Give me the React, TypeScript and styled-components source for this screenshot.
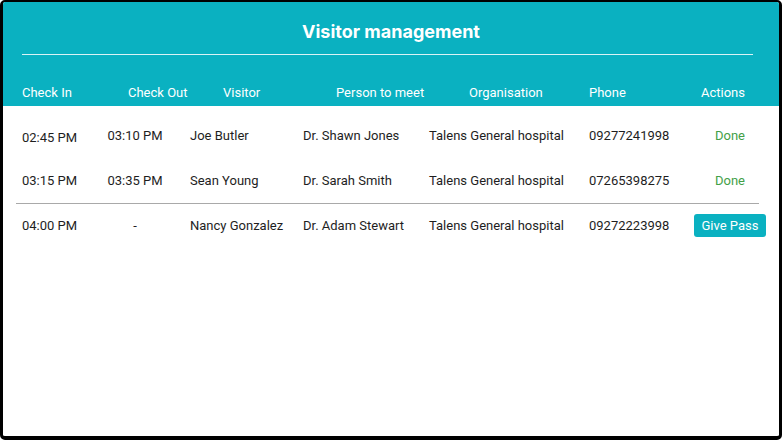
import React from "react";
import styled, { createGlobalStyle } from "styled-components";

const Global = createGlobalStyle`
  html, body { margin: 0; padding: 0; background: #ffffff; }
  * { box-sizing: border-box; }
`;

const Frame = styled.div`
  width: 782px;
  height: 440px;
  border-style: solid;
  border-color: #000;
  border-width: 2px 3px 4px 3px;
  border-radius: 5px;
  background: #fff;
  overflow: hidden;
  font-family: Roboto, "Liberation Sans", sans-serif;
`;

const Header = styled.div`
  background: #0ab1c1;
  height: 104px;
  display: flex;
  flex-direction: column;
`;

const Title = styled.h1`
  margin: 0;
  padding-top: 19px;
  height: 50px;
  text-align: center;
  font-family: Inter, "Noto Sans", sans-serif;
  font-weight: 700;
  font-size: 18px;
  color: #ffffff;
  letter-spacing: 0;
`;

const Rule = styled.div`
  height: 1px;
  background: rgba(255, 255, 255, 0.85);
  margin: 2px 26px 0 19px;
`;

const HeadRow = styled.div`
  display: grid;
  grid-template-columns: 106px 95px 113px 133px 120px 112px 60px;
  padding: 30px 0 0 19px;
  font-size: 13px;
  color: #ffffff;
`;

const HeadCell = styled.div<{ $center?: boolean }>`
  text-align: ${(p) => (p.$center ? "center" : "left")};
  white-space: nowrap;
`;

const Body = styled.div`
  padding-top: 7px;
`;

const Row = styled.div`
  display: grid;
  grid-template-columns: 58px 110px 113px 126px 160px 105px 72px;
  align-items: center;
  height: 45px;
  padding-left: 19px;
  font-size: 13px;
  color: #1e1e1e;
`;

const Cell = styled.div<{ $center?: boolean; $drop?: boolean }>`
  text-align: ${(p) => (p.$center ? "center" : "left")};
  white-space: nowrap;
  padding-top: ${(p) => (p.$drop ? "3px" : "0")};
`;

const Divider = styled.div`
  height: 1px;
  background: #a9a9a9;
  margin: 0 20px -1px 13px;
`;

const Done = styled.span`
  color: #43a047;
`;

const PassButton = styled.button`
  width: 72px;
  height: 23px;
  border: none;
  border-radius: 3px;
  background: #0ab1c1;
  color: #fff;
  font-family: Roboto, "Liberation Sans", sans-serif;
  font-size: 13px;
  padding: 0;
  cursor: pointer;
`;

type Visit = {
  checkIn: string;
  checkOut: string;
  visitor: string;
  host: string;
  org: string;
  phone: string;
  done: boolean;
};

const visits: Visit[] = [
  { checkIn: "02:45 PM", checkOut: "03:10 PM", visitor: "Joe Butler", host: "Dr. Shawn Jones", org: "Talens General hospital", phone: "09277241998", done: true },
  { checkIn: "03:15 PM", checkOut: "03:35 PM", visitor: "Sean Young", host: "Dr. Sarah Smith", org: "Talens General hospital", phone: "07265398275", done: true },
  { checkIn: "04:00 PM", checkOut: "-", visitor: "Nancy Gonzalez", host: "Dr. Adam Stewart", org: "Talens General hospital", phone: "09272223998", done: false },
];

export default function App() {
  return (
    <>
      <Global />
      <Frame>
        <Header>
          <Title>Visitor management</Title>
          <Rule />
          <HeadRow>
            <HeadCell>Check In</HeadCell>
            <HeadCell>Check Out</HeadCell>
            <HeadCell>Visitor</HeadCell>
            <HeadCell>Person to meet</HeadCell>
            <HeadCell>Organisation</HeadCell>
            <HeadCell>Phone</HeadCell>
            <HeadCell>Actions</HeadCell>
          </HeadRow>
        </Header>
        <Body>
          {visits.map((v, i) => (
            <React.Fragment key={v.phone}>
              {i === 2 && <Divider />}
              <Row>
                <Cell $drop={i === 0}>{v.checkIn}</Cell>
                <Cell $center>{v.checkOut}</Cell>
                <Cell>{v.visitor}</Cell>
                <Cell>{v.host}</Cell>
                <Cell>{v.org}</Cell>
                <Cell>{v.phone}</Cell>
                <Cell $center>
                  {v.done ? <Done>Done</Done> : <PassButton>Give Pass</PassButton>}
                </Cell>
              </Row>
            </React.Fragment>
          ))}
        </Body>
      </Frame>
    </>
  );
}
